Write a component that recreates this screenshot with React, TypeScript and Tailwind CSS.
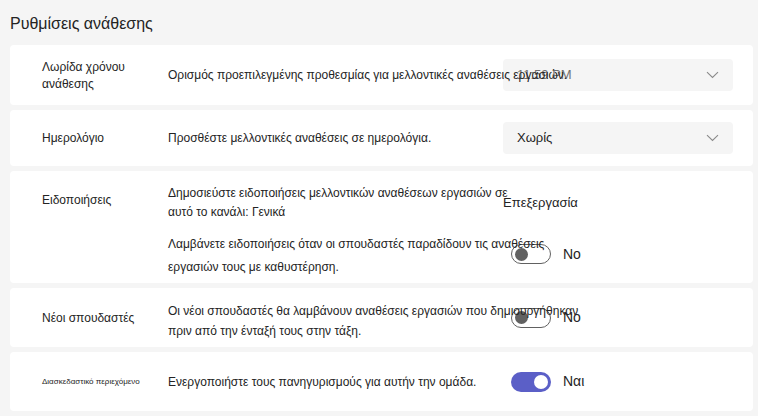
function Toggle({ on }: { on: boolean }) {
  return on ? (
    <div className="flex h-[20px] w-[40px] items-center justify-end rounded-full bg-[#5b5fc7] pr-[3px]">
      <div className="h-[14px] w-[14px] rounded-full bg-white" />
    </div>
  ) : (
    <div className="flex h-[20px] w-[40px] items-center rounded-full border border-[#616161] bg-white pl-[3px]">
      <div className="h-[13px] w-[13px] rounded-full bg-[#616161]" />
    </div>
  );
}

function Select({ value, muted }: { value: string; muted?: boolean }) {
  return (
    <div className="flex h-[32px] w-[230px] items-center justify-between rounded-[4px] bg-[#f5f5f5] pl-[14px] pr-[14px]">
      <span className={muted ? "text-[13px] text-[#707070]" : "text-[13px] text-[#242424]"}>{value}</span>
      <svg width="13" height="8" viewBox="0 0 13 8" fill="none">
        <path d="M1 1.2 6.5 6.5 12 1.2" stroke="#8a8a8a" strokeWidth="1.1" />
      </svg>
    </div>
  );
}

function SwitchCell({ on, label, lift }: { on: boolean; label: string; lift?: boolean }) {
  return (
    <div className={lift ? "-mt-[4px] flex items-center gap-[12px] pl-[8px]" : "flex items-center gap-[12px] pl-[8px]"}>
      <Toggle on={on} />
      <span className="text-[14px] text-[#242424]">{label}</span>
    </div>
  );
}

export default function App() {
  return (
    <div
      className="min-h-[416px] w-[758px] bg-[#f5f5f5] text-[#242424]"
      style={{ fontFamily: '"Liberation Sans", Arial, sans-serif' }}
    >
      <h1 className="pl-[10px] pt-[13px] pb-[11px] text-[16px] leading-[21px]">Ρυθμίσεις ανάθεσης</h1>

      <div className="flex flex-col gap-[5px] px-[10px] pr-[5px]">
        <div className="flex h-[60px] items-center rounded-[4px] bg-white pl-[32px]">
          <div className="w-[126px] pt-[2px] text-[12px] leading-[17px]">
            Λωρίδα χρόνου
            <br />
            ανάθεσης
          </div>
          <div className="relative z-10 w-[335px] whitespace-nowrap text-[12px]">
            Ορισμός προεπιλεγμένης προθεσμίας για μελλοντικές αναθέσεις εργασιών.
          </div>
          <Select value="11:59 PM" muted />
        </div>

        <div className="flex h-[56px] items-center rounded-[4px] bg-white pl-[32px]">
          <div className="w-[126px] text-[12px]">Ημερολόγιο</div>
          <div className="w-[335px] whitespace-nowrap text-[12px]">
            Προσθέστε μελλοντικές αναθέσεις σε ημερολόγια.
          </div>
          <Select value="Χωρίς" />
        </div>

        <div className="flex h-[112px] rounded-[4px] bg-white pl-[32px] pt-[20px]">
          <div className="w-[126px] text-[12px]">Ειδοποιήσεις</div>
          <div className="flex flex-col gap-[10px] -mt-[8px]">
            <div className="flex h-[40px] items-center">
              <div className="w-[335px] whitespace-nowrap text-[12px] leading-[19px]">
                Δημοσιεύστε ειδοποιήσεις μελλοντικών αναθέσεων εργασιών σε
                <br />
                αυτό το κανάλι: Γενικά
              </div>
              <span className="text-[13px]">Επεξεργασία</span>
            </div>
            <div className="flex h-[46px] items-center">
              <div className="relative z-10 w-[335px] whitespace-nowrap text-[12px] leading-[23px]">
                Λαμβάνετε ειδοποιήσεις όταν οι σπουδαστές παραδίδουν τις αναθέσεις
                <br />
                εργασιών τους με καθυστέρηση.
              </div>
              <SwitchCell on={false} label="No" lift />
            </div>
          </div>
        </div>

        <div className="flex h-[59px] items-center rounded-[4px] bg-white pl-[32px]">
          <div className="w-[126px] text-[12px]">Νέοι σπουδαστές</div>
          <div className="relative z-10 w-[335px] whitespace-nowrap pt-[7px] text-[12px] leading-[20px]">
            Οι νέοι σπουδαστές θα λαμβάνουν αναθέσεις εργασιών που δημιουργήθηκαν
            <br />
            πριν από την ένταξή τους στην τάξη.
          </div>
          <SwitchCell on={false} label="No" />
        </div>

        <div className="flex h-[59px] items-center rounded-[4px] bg-white pl-[32px]">
          <div className="w-[126px] text-[8px]">Διασκεδαστικό περιεχόμενο</div>
          <div className="w-[335px] whitespace-nowrap text-[12px]">
            Ενεργοποιήστε τους πανηγυρισμούς για αυτήν την ομάδα.
          </div>
          <SwitchCell on label="Ναι" />
        </div>
      </div>
    </div>
  );
}
